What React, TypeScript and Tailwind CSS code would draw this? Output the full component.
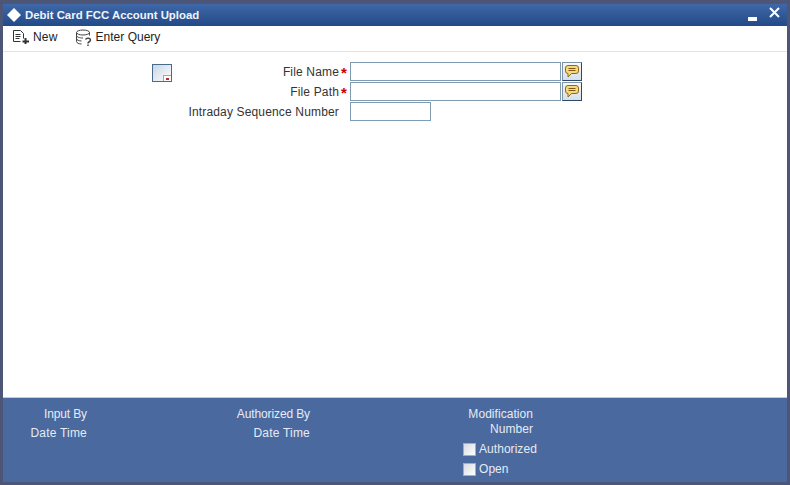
const font = "font-['Liberation_Sans',Arial,sans-serif]";

function NoteButton() {
  return (
    <button className="flex h-[19px] w-[20px] items-center justify-center border border-t-[#7f93a8] border-l-[#7f93a8] border-r-[#2f4a66] border-b-[#2f4a66] bg-gradient-to-b from-[#f4f7fb] to-[#d5dfeb]">
      <svg width="16" height="15" viewBox="0 0 16 15">
        <path d="M4 1.500h8a2.500 2.500 0 0 1 2.500 2.500v3a2.500 2.500 0 0 1-2.500 2.500H7.500L4 13V9.500a2.500 2.500 0 0 1-2.500-2.500V4A2.500 2.500 0 0 1 4 1.500z" fill="#f7d87c" stroke="#8a6a1e" />
        <path d="M4.500 4.500h7M4.500 6.500h7" stroke="#7a5a14" />
      </svg>
    </button>
  );
}

function FieldRow({ label, required, wide }: { label: string; required?: boolean; wide?: boolean }) {
  return (
    <div className="flex h-[20px] items-center">
      <div className="w-[336px] pt-[1px] text-right text-[12px] tracking-[0.16px] text-[#333333]">{label}</div>
      <div className="w-[11px] pl-[2px] pt-[2px] text-[15px] font-bold leading-none text-[#cc0000]">{required ? '*' : ''}</div>
      <input className={`h-[19px] border border-[#7f9cb2] bg-white ${wide ? 'w-[211px]' : 'w-[81px]'}`} />
      {wide ? (
        <div className="ml-[1px]">
          <NoteButton />
        </div>
      ) : null}
    </div>
  );
}

function AuditCol({ width, top, bottom }: { width: string; top: string; bottom: string }) {
  return (
    <div className={`${width} text-right text-[12px] text-[#e6ebf4]`}>
      <div className="h-[19px] leading-[19px] tracking-[-0.12px]">{top}</div>
      <div className="h-[19px] leading-[19px] tracking-[0.2px]">{bottom}</div>
    </div>
  );
}

function CheckRow({ label }: { label: string }) {
  return (
    <div className="flex h-[20px] items-center">
      <div className="h-[13px] w-[13px] border border-[#a4acbe] bg-gradient-to-br from-[#d8dbe2] to-white" />
      <span className="ml-[3px] tracking-[0.05px]">{label}</span>
    </div>
  );
}

export default function App() {
  return (
    <div className={`${font} flex h-[485px] w-[790px] flex-col bg-[#4d5676] pb-[3px] pl-[3px] pr-[3px] pt-[4px]`}>
      <div className="flex h-[22px] items-center justify-between bg-gradient-to-b from-[#3f68a8] to-[#234a88] pr-[7px]">
        <div className="flex items-center">
          <svg width="16" height="16" viewBox="0 0 16 16" className="ml-[3px]">
            <path d="M8 1l7 7-7 7-7-7z" fill="#ffffff" />
          </svg>
          <span className="ml-[3px] pt-[2px] text-[11.4px] font-bold text-[#f0f4fa]">Debit Card FCC Account Upload</span>
        </div>
        <div className="flex items-center gap-[12px]">
          <div className="mt-[8px] h-[4px] w-[9px] bg-white" />
          <svg width="11" height="11" viewBox="0 0 11 11" className="-mt-[5px]">
            <path d="M1 1l9 9M10 1l-9 9" stroke="#ffffff" strokeWidth="2" />
          </svg>
        </div>
      </div>

      <div className="flex h-[26px] items-center border-b border-[#e4e4e4] bg-white pb-[3px] text-[12px] text-[#222222]">
        <div className="ml-[9px] flex items-center">
          <svg width="18" height="16" viewBox="0 0 18 16" fill="none" stroke="#333333">
            <path d="M1.500 1.500h7l3 3v5M1.500 1.500v11h7" />
            <path d="M3.500 5.500h5M3.500 7.500h5M3.500 9.500h4" />
            <path d="M13.500 9v6M10.500 12.500h6.500" strokeWidth="2" />
          </svg>
          <span className="ml-[3px] tracking-[0.2px]">New</span>
        </div>
        <div className="ml-[17px] flex items-center">
          <svg width="18" height="17" viewBox="0 0 18 17" fill="none" stroke="#444444">
            <ellipse cx="8" cy="3.500" rx="6.500" ry="2.500" />
            <path d="M1.500 3.500v9c0 1.500 2.500 2.500 5 2.500M14.500 3.500v3M1.500 6.500c0 1.500 3 2.500 6.500 2.500M1.500 9.500c0 1.500 2.500 2.500 5 2.500" />
            <path d="M10.500 10.500c1-2 5-1.500 5 .5 0 2-2.500 1.500-2.500 3.500M13 15.500v1.500" strokeWidth="1.500" />
          </svg>
          <span className="ml-[3px]">Enter Query</span>
        </div>
      </div>

      <div className="relative flex-1 bg-white pt-[9px]">
        <div className="absolute left-[149px] top-[12px] h-[18px] w-[20px] border border-[#4a6a8c] bg-gradient-to-br from-[#c9d6e4] to-white">
          <div className="absolute bottom-0 right-0 h-[6px] w-[8px] border-l border-t border-[#9aa8b8] bg-white" />
          <div className="absolute bottom-[1px] right-[2px] h-[2px] w-[3px] bg-[#b03030]" />
        </div>
        <FieldRow label="File Name" required wide />
        <FieldRow label="File Path" required wide />
        <FieldRow label="Intraday Sequence Number" />
      </div>

      <div className="flex h-[85px] border-t border-[#b9cde4] bg-[#49699f] pt-[7px] text-[12px] text-[#e6ebf4]">
        <AuditCol width="w-[84px]" top="Input By" bottom="Date Time" />
        <AuditCol width="w-[223px]" top="Authorized By" bottom="Date Time" />
        <div className="ml-[153px] w-[76px]">
          <div className="mr-[6px] mt-[2px] text-right leading-[15px] tracking-[0.05px]">Modification Number</div>
          <div className="mt-[2px]">
            <CheckRow label="Authorized" />
            <CheckRow label="Open" />
          </div>
        </div>
      </div>
    </div>
  );
}
